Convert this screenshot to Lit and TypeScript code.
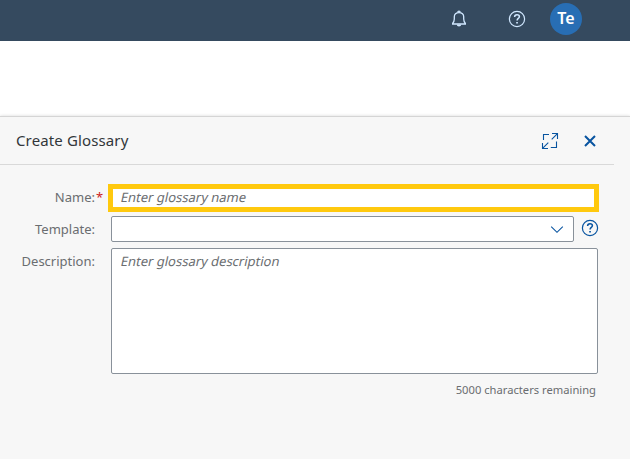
import { LitElement, html, css, svg } from "lit";
import { customElement, property } from "lit/decorators.js";

const glyphs: Record<string, unknown> = {
  bell: svg`<path d="M2 14h14M2.4 13.8C4 12.2 4.3 11 4.3 9V6.8C4.3 4.2 6 2.6 9 2.6s4.7 1.6 4.7 4.2V9c0 2 .3 3.2 1.9 4.8" stroke-width="1.3"/><path d="M7.8 2.3a1.2 1.2 0 0 1 2.4 0" stroke-width="1.2"/><path d="M6.8 14.5h4.4a2.2 2 0 0 1-4.4 0z" fill="currentColor" stroke="none"/>`,
  help: svg`<circle cx="9" cy="9" r="7.6" stroke-width="1.2"/><path d="M6.6 7.1c0-1.5 1-2.3 2.4-2.3s2.4.8 2.4 2c0 1.6-2.3 1.7-2.3 3.6" stroke-width="1.5"/><path d="M8.2 11.9h1.7v1.7H8.2z" fill="currentColor" stroke="none"/>`,
  expand: svg`<path d="M2.5 8V2.5H8M11 1.5h5.5V7M16.2 1.8l-5.5 5.5M15.5 9.5v6H9.8M1.5 11v5.5H7M1.8 16.2l5.5-5.5" stroke-width="1.1"/>`,
  close: svg`<path d="M4 4l10 10M14 4L4 14" stroke-width="2"/>`,
  chevron: svg`<path d="M3.2 6.7L9 12.3l5.8-5.6" stroke-width="1.1"/>`,
};

@customElement("line-icon")
class LineIcon extends LitElement {
  @property() name = "";
  static styles = css`
    :host { display: block; width: 18px; height: 18px; flex: none; }
    svg { display: block; fill: none; stroke: currentColor; }
  `;
  render() {
    return html`<svg width="18" height="18" viewBox="0 0 18 18">${glyphs[this.name]}</svg>`;
  }
}

@customElement("app-root")
class AppRoot extends LitElement {
  static styles = css`
    * { box-sizing: border-box; }
    :host { display: flex; flex-direction: column; height: 459px; overflow: hidden; background: #fff; font: 13px/18px "Noto Sans", sans-serif; color: #6a6d70; }
    .shell { height: 41px; flex: none; background: #354a5f; display: flex; justify-content: flex-end; align-items: flex-start; padding-right: 48px; color: #d1e8ff; }
    .shell line-icon { margin-top: 10px; }
    .bell { margin-right: 40px; }
    .help { margin-right: 24px; }
    .avatar { width: 32px; height: 32px; margin-top: 3px; border-radius: 50%; background: #286eb4; color: #fff; font: 600 16px/31px "Noto Sans", sans-serif; text-align: center; }
    .gap { height: 75px; flex: none; }
    .panel { flex: 1; background: #f7f7f7; border-top: 1px solid #d5d5d5; box-shadow: 0 0 3px rgba(0,0,0,.16); }
    .bar { width: 614px; height: 48px; border-bottom: 1px solid #d9d9d9; display: flex; align-items: center; padding: 0 15px 0 16px; color: #0854a0; }
    h1 { flex: 1; margin: 0; padding-bottom: 2px; font-size: 15px; line-height: 20px; font-weight: 400; letter-spacing: .13px; color: #32363a; }
    .expand { margin-right: 22px; }
    .form { display: grid; grid-template-columns: 95px 487px; column-gap: 16px; padding-top: 19px; }
    label { text-align: right; padding-top: 4px; white-space: nowrap; position: relative; }
    .template { padding-top: 8px; }
    .description { padding-top: 10px; }
    .req { position: absolute; left: 96px; top: 4px; color: #c22; font-size: 13px; }
    .name { width: 491px; height: 28px; margin-left: -3px; border: 5px solid #ffc90e; background: #fff; padding: 0 8px; line-height: 17px; }
    .hint { display: inline-block; transform: skewX(-12deg); }
    .row { display: flex; align-items: center; margin-top: 4px; color: #0854a0; }
    .select { width: 463px; height: 26px; flex: none; border: 1px solid #89919a; border-radius: 2px; background: #fff; display: flex; align-items: center; justify-content: flex-end; padding: 0 7px; margin-right: 7px; }
    .row > line-icon { margin-top: -2px; }
    .area { height: 126px; margin-top: 6px; border: 1px solid #89919a; border-radius: 2px; background: #fff; padding: 3px 9px; }
    .count { grid-column: 2; text-align: right; font-size: 11.2px; line-height: 16px; padding: 8px 2px 0 0; }
  `;
  render() {
    return html`
      <header class="shell">
        <line-icon class="bell" name="bell"></line-icon>
        <line-icon class="help" name="help"></line-icon>
        <div class="avatar">Te</div>
      </header>
      <div class="gap"></div>
      <section class="panel">
        <div class="bar">
          <h1>Create Glossary</h1>
          <line-icon class="expand" name="expand"></line-icon>
          <line-icon name="close"></line-icon>
        </div>
        <div class="form">
          <label>Name:<span class="req">*</span></label>
          <div class="name"><span class="hint">Enter glossary name</span></div>
          <label class="template">Template:</label>
          <div class="row">
            <div class="select"><line-icon name="chevron"></line-icon></div>
            <line-icon name="help"></line-icon>
          </div>
          <label class="description">Description:</label>
          <div class="area"><span class="hint">Enter glossary description</span></div>
          <div class="count">5000 characters remaining</div>
        </div>
      </section>`;
  }
}
